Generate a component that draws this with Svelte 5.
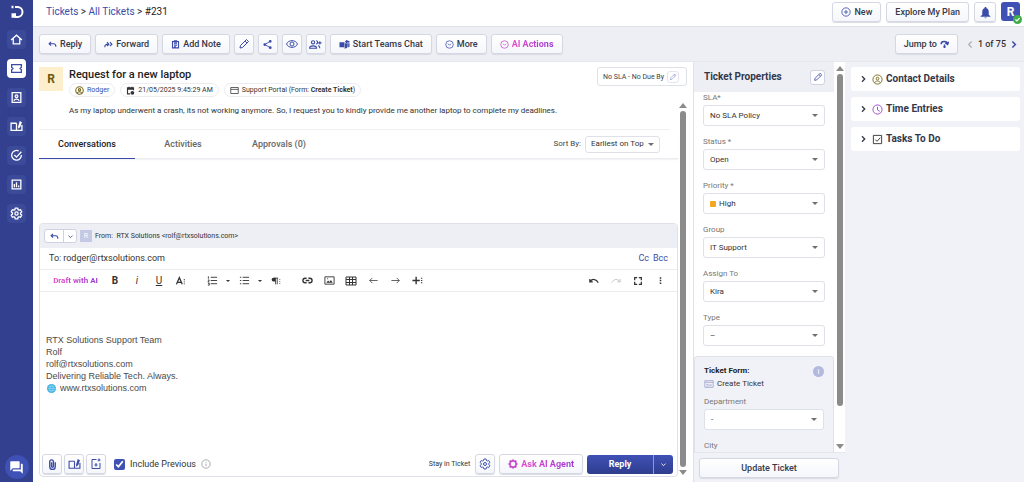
<script lang="ts">
  type Shape = { d: string; fill?: boolean };

  const GEAR =
    'M19.4 13c.1-.3.1-.6.1-1s0-.7-.1-1l2.1-1.6c.2-.2.2-.4.1-.7l-2-3.4c-.1-.3-.4-.3-.6-.3l-2.5 1c-.5-.4-1-.7-1.7-1l-.3-2.6c0-.2-.3-.4-.5-.4h-4c-.2 0-.5.2-.5.4L9.1 5c-.6.3-1.2.6-1.7 1l-2.4-1c-.3 0-.5 0-.7.3l-2 3.4c-.1.3 0 .5.2.7L4.6 11c-.1.3-.1.7-.1 1s0 .7.1 1l-2.1 1.6c-.2.2-.3.4-.2.7l2 3.4c.2.3.4.3.7.3l2.4-1c.5.4 1.1.7 1.7 1l.4 2.6c0 .2.3.4.5.4h4c.2 0 .5-.2.5-.4l.3-2.6c.7-.3 1.2-.6 1.7-1l2.5 1c.2 0 .5 0 .6-.3l2-3.4c.1-.3.1-.5-.1-.7z';

  const icons: Record<string, Shape[]> = {
    home: [{ d: 'M2 13L12 4l10 9M6 10v10h12V10' }],
    ticket: [{ d: 'M3 5h18v4.500l-2.500 2.500 2.500 2.500V19H3v-4.500L5.500 12 3 9.500z' }],
    contact: [{ d: 'M4 3h16v18H4zM7 18c2-4 8-4 10 0M12 7a2.500 2.500 0 1 1 0 5 2.500 2.500 0 0 1 0-5' }],
    book: [
      { d: 'M12 6H2v13h10V6M12 19h10V9' },
      { d: 'M15 12l3-10 4 2-3 9-4 3z', fill: true },
    ],
    done: [{ d: 'M21 11a9 9 0 1 1-5-7.500M8 11l4 4 9-10' }],
    chart: [{ d: 'M4 4h16v16H4zM8 17v-6M12 17V8M16 17v-3' }],
    gear: [{ d: GEAR }, { d: 'M12 9a3 3 0 1 1 0 6 3 3 0 0 1 0-6' }],
    agent: [{ d: 'M12 4l5 2 3 6-3 6-5 2-5-2-3-6 3-6z' }, { d: 'M12 1v3M12 20v3M1 12h3M20 12h3M4 4l3 3M17 17l3 3M20 4l-3 3M7 17l-3 3' }],
    chat: [{ d: 'M21 6h-2v9H6v2c0 .6.400 1 1 1h11l4 4V7c0-.6-.400-1-1-1zm-4 6V3c0-.6-.400-1-1-1H3c-.6 0-1 .400-1 1v14l4-4h10c.6 0 1-.400 1-1z', fill: true }],
    reply: [{ d: 'M8 5L3 10l5 5M3 10h12c4 0 6 2 6 8' }],
    forward: [{ d: 'M2 19c0-6 3-8 10-8M8 6l5 5-5 5M16 6l5 5-5 5' }],
    note: [{ d: 'M4 4h16v17H4zM9 2h6v4H9zM8 10h8M8 14h8M8 18h5' }],
    pencil: [{ d: 'M4 20l1-5L17 3l4 4L9 19zM14 6l4 4' }],
    share: [
      { d: 'M18 5L6 12l12 7' },
      { d: 'M18 2a3 3 0 1 1 0 6 3 3 0 0 1 0-6M6 9a3 3 0 1 1 0 6 3 3 0 0 1 0-6M18 16a3 3 0 1 1 0 6 3 3 0 0 1 0-6', fill: true },
    ],
    eye: [{ d: 'M1 12c4-9 18-9 22 0-4 9-18 9-22 0zM12 8a4 4 0 1 1 0 8 4 4 0 0 1 0-8' }],
    people: [{ d: 'M1 19c0-6 13-6 13 0zM7.500 5a3 3 0 1 1 0 6 3 3 0 0 1 0-6M13 5c4 0 4 6 0 6M17 14c2 1 3 3 3 5M20 6v6M17 9h6' }],
    teams: [
      { d: 'M1 7h11v11H1zM13 9h6v7c0 5-7 6-9 3h3zM15 3a3 3 0 1 1 0 5 3 3 0 0 1 0-5M20 9h3v6c0 2-1 3-3 3zM21 4a2 2 0 1 1 0 4 2 2 0 0 1 0-4', fill: true },
    ],
    circleDown: [{ d: 'M12 2a10 10 0 1 1 0 20 10 10 0 0 1 0-20M8 10l4 4 4-4' }],
    circlePlus: [{ d: 'M12 2a10 10 0 1 1 0 20 10 10 0 0 1 0-20M12 7v10M7 12h10' }],
    bell: [{ d: 'M12 2c-1 0-2 1-2 2-3 1-4 4-4 7v5l-3 3v1h18v-1l-3-3v-5c0-3-1-6-4-7 0-1-1-2-2-2zM10 21h4c0 2-4 2-4 0z', fill: true }],
    check: [{ d: 'M5 12l5 5 9-10' }],
    jump: [{ d: 'M3 11c0-9 16-9 17 0M14 8l6 4 3-7M12 12v9M9 18h6' }],
    left: [{ d: 'M15 4l-8 8 8 8' }],
    right: [{ d: 'M9 4l8 8-8 8' }],
    down: [{ d: 'M5 9l7 7 7-7' }],
    user: [{ d: 'M12 2a10 10 0 1 1 0 20 10 10 0 0 1 0-20M6 19c2-5 10-5 12 0M12 7a3 3 0 1 1 0 6 3 3 0 0 1 0-6' }],
    calendar: [
      { d: 'M20 11V5H4v16h7M8 2v3M16 2v3' },
      { d: 'M4 5h16v5H4zM17 13a5 5 0 1 1 0 10 5 5 0 0 1 0-10', fill: true },
    ],
    portal: [{ d: 'M2 4h20v16H2zM2 9h20' }],
    form: [{ d: 'M2 4h20v16H2zM2 8h20M6 13h5M14 13v4M17 13v4M6 17h5' }],
    clock: [{ d: 'M12 2a10 10 0 1 1 0 20 10 10 0 0 1 0-20M12 6v7l5 3' }],
    tasks: [{ d: 'M3 3h18v18H3zM7 12l4 4 7-8' }],
    numbered: [{ d: 'M8 5h14M8 12h14M8 19h14M3 3v5M2 11h3l-3 4h3M2 18h3v4H2' }],
    bullets: [{ d: 'M8 5h14M8 12h14M8 19h14M2 5h3M2 12h3M2 19h3' }],
    paragraph: [
      { d: 'M11 5v15M15 5v15M8 5h9M21 7v2M21 12v2M21 17v2' },
      { d: 'M11 4H6a4 4 0 0 0 0 9h5z', fill: true },
    ],
    textMore: [{ d: 'M1 20L8 4l7 16M4 15h8M20 8v2M20 13v2M20 18v2' }],
    link: [{ d: 'M10 7H7a5 5 0 0 0 0 10h3M14 7h3a5 5 0 0 1 0 10h-3M8 12h8' }],
    image: [{ d: 'M2 4h20v16H2z' }, { d: 'M5 17l4-5 3 3 3-4 4 6zM7 7h2v2H7z', fill: true }],
    table: [{ d: 'M2 4h20v16H2zM2 9h20M2 15h20M9 4v16M15 4v16' }],
    arrowLeft: [{ d: 'M23 12H2M9 5l-7 7 7 7' }],
    arrowRight: [{ d: 'M1 12h21M15 5l7 7-7 7' }],
    plusMore: [{ d: 'M9 4v16M1 12h16M21 6v2M21 11v2M21 16v2' }],
    undo: [{ d: 'M2 7v7h7M3 13c5-7 15-6 19 3' }],
    redo: [{ d: 'M22 7v7h-7M21 13C16 6 6 7 2 16' }],
    fullscreen: [{ d: 'M4 10V4h6M14 4h6v6M20 14v6h-6M10 20H4v-6' }],
    dots: [{ d: 'M10 3h4v4h-4zM10 10h4v4h-4zM10 17h4v4h-4z', fill: true }],
    clip: [{ d: 'M18 7v10a6 6 0 0 1-12 0V6a4 4 0 0 1 8 0v10a2 2 0 0 1-4 0V7' }],
    template: [{ d: 'M13 3H4v18h16V10M18 1v6M15 4h6M12 10v7M9 14h6' }],
    info: [{ d: 'M12 2a10 10 0 1 1 0 20 10 10 0 0 1 0-20M12 11v6M12 7v2' }],
    globe: [{ d: 'M2 12h20M12 2c-6 6-6 14 0 20M12 2c6 6 6 14 0 20M4 7h16M4 17h16' }],
  };

  const nav = ['home', 'ticket', 'contact', 'book', 'done', 'chart', 'gear'];

  const fields = [
    { id: 'sla', label: 'SLA*', value: 'No SLA Policy' },
    { id: 'status', label: 'Status *', value: 'Open' },
    { id: 'priority', label: 'Priority *', value: 'High', swatch: '#f5a623' },
    { id: 'group', label: 'Group', value: 'IT Support' },
    { id: 'assign', label: 'Assign To', value: 'Kira' },
    { id: 'type', label: 'Type', value: '–' },
  ];

  const panels = [
    { icon: 'user', color: '#7a6a1e', title: 'Contact Details' },
    { icon: 'clock', color: '#9a45cf', title: 'Time Entries' },
    { icon: 'tasks', color: '#333333', title: 'Tasks To Do' },
  ];

  const tabs = ['Conversations', 'Activities', 'Approvals (0)'];
  let activeTab = $state('Conversations');
  let recipient = $state('rodger@rtxsolutions.com');
  let includePrevious = $state(true);
</script>

{#snippet icon(name: string, size = 12, weight = 2)}
  <svg class="icon" width={size} height={size} viewBox="0 0 24 24" stroke-width={weight} aria-hidden="true">
    {#each icons[name] as shape}
      <path d={shape.d} class:solid={shape.fill} />
    {/each}
  </svg>
{/snippet}

{#snippet scrollbar()}
  <div class="scrollbar" aria-hidden="true">
    <span class="scrollbar__up"></span>
    <span class="scrollbar__thumb"></span>
    <span class="scrollbar__down"></span>
  </div>
{/snippet}

{#snippet tool(name: string, label: string, size = 12, weight = 3)}
  <button class="tool" aria-label={label}>{@render icon(name, size, weight)}</button>
{/snippet}

<div class="shell">
  <nav class="rail" aria-label="Main">
    <a class="rail__logo" href="/" aria-label="Desk home">
      <svg width="14" height="14" viewBox="0 0 28 28" fill="none" stroke="#ffffff" stroke-width="4">
        <path d="M10 4h5a10 10 0 0 1 0 20H9" />
        <path d="M3 4h4" stroke-width="5" />
        <path d="M3 21h9" stroke-width="9" />
      </svg>
    </a>
    {#each nav as item}
      <a class="rail__item" class:active={item === 'ticket'} href="/{item}" aria-label={item}>
        {@render icon(item, 13, 2.4)}
      </a>
    {/each}
    <button class="rail__chat" aria-label="Chat">{@render icon('chat', 15, 0)}</button>
  </nav>

  <div class="page">
    <header class="topbar">
      <div class="crumbs">
        <a href="/tickets">Tickets</a> &gt; <a href="/tickets/all">All Tickets</a> &gt; <span>#231</span>
      </div>
      <div class="topbar__actions">
        <button class="btn">{@render icon('circlePlus', 10)}New</button>
        <button class="btn">Explore My Plan</button>
        <button class="btn btn--square btn--bell" aria-label="Notifications">{@render icon('bell', 13, 0)}</button>
        <button class="me" aria-label="Profile">
          R<span class="me__status">{@render icon('check', 7, 4)}</span>
        </button>
      </div>
    </header>

    <div class="toolbar">
      <button class="btn">{@render icon('reply', 9, 3)}Reply</button>
      <button class="btn">{@render icon('forward', 9, 3)}Forward</button>
      <button class="btn">{@render icon('note', 9, 3)}Add Note</button>
      <button class="btn btn--square" aria-label="Edit">{@render icon('pencil', 12, 2)}</button>
      <button class="btn btn--square" aria-label="Share">{@render icon('share', 11, 2)}</button>
      <button class="btn btn--square" aria-label="Watch">{@render icon('eye', 12, 2)}</button>
      <button class="btn btn--square" aria-label="Add people">{@render icon('people', 13)}</button>
      <button class="btn">{@render icon('teams', 11, 0)}Start Teams Chat</button>
      <button class="btn">{@render icon('circleDown', 9)}More</button>
      <button class="btn btn--ai">{@render icon('circleDown', 9)}<span class="ai">AI Actions</span></button>
      <button class="btn btn--jump">Jump to {@render icon('jump', 9, 4)}</button>
      <div class="pager">
        <button class="muted" aria-label="Previous">{@render icon('left', 9, 3)}</button>
        <span>1 of 75</span>
        <button aria-label="Next">{@render icon('right', 9, 4)}</button>
      </div>
    </div>

    <div class="columns">
      <main class="ticket">
        <div class="ticket__head">
          <div class="avatar">R</div>
          <div class="ticket__title">
            <h1>Request for a new laptop</h1>
            <div class="chips">
              <a class="chip" href="/contacts/rodger"><span class="olive">{@render icon('user', 9, 3)}</span>Rodger</a>
              <span class="chip">{@render icon('calendar', 9, 3)}21/05/2025 9:45:29 AM</span>
              <span class="chip">{@render icon('portal', 9, 2)}<span>Support Portal (Form: <b>Create Ticket</b>)</span></span>
            </div>
          </div>
          <div class="sla">
            No SLA - No Due By
            <button aria-label="Edit SLA">{@render icon('pencil', 8)}</button>
          </div>
        </div>

        <div class="ticket__scroll">
          <div class="ticket__body">
            <p class="message">
              As my laptop underwent a crash, its not working anymore. So, I request you to kindly provide me another
              laptop to complete my deadlines.
            </p>

            <div class="tabs">
              {#each tabs as tab}
                <button class="tab" class:active={tab === activeTab} onclick={() => (activeTab = tab)}>{tab}</button>
              {/each}
              <label class="sort" for="sort">Sort By:</label>
              <div class="select select--sort">
                <select id="sort"><option>Earliest on Top</option></select>
              </div>
            </div>

            <section class="composer" aria-label="Reply">
              <div class="composer__from">
                <div class="split">
                  <button aria-label="Reply">{@render icon('reply', 9, 3)}</button>
                  <button aria-label="Reply options">{@render icon('down', 7, 3)}</button>
                </div>
                <span class="composer__initial">R</span>
                <span>From:&nbsp; RTX Solutions &lt;rolf@rtxsolutions.com&gt;</span>
              </div>
              <div class="composer__to">
                <label for="to">To:</label>
                <input id="to" type="text" bind:value={recipient} />
                <button>Cc</button>
                <button>Bcc</button>
              </div>
              <div class="format">
                <button class="draft"><span class="ai">Draft with AI</span></button>
                <button class="tool tool--bold" aria-label="Bold">B</button>
                <button class="tool tool--italic" aria-label="Italic">i</button>
                <button class="tool tool--underline" aria-label="Underline">U</button>
                {@render tool('textMore', 'More text', 10)}
                <div class="format__group">
                  {@render tool('numbered', 'Ordered list', 11, 2)}
                  <button class="tool tool--caret" aria-label="Ordered list style"></button>
                  {@render tool('bullets', 'Unordered list', 11, 2)}
                  <button class="tool tool--caret" aria-label="Unordered list style"></button>
                  {@render tool('paragraph', 'More paragraph', 10, 2)}
                </div>
                <div class="format__group">
                  {@render tool('link', 'Insert link', 11)}
                  {@render tool('image', 'Insert image', 11, 2)}
                  {@render tool('table', 'Insert table', 12, 2)}
                  {@render tool('arrowLeft', 'Left to right', 9, 2)}
                  {@render tool('arrowRight', 'Right to left', 9, 2)}
                  {@render tool('plusMore', 'More rich', 11)}
                </div>
                <div class="format__end">
                  {@render tool('undo', 'Undo', 10)}
                  <button class="tool faded" aria-label="Redo">{@render icon('redo', 10)}</button>
                  {@render tool('fullscreen', 'Fullscreen', 10)}
                  {@render tool('dots', 'More', 9)}
                </div>
              </div>
              <div class="editor" contenteditable="true" role="textbox" tabindex="0" aria-label="Message">
                <div>RTX Solutions Support Team</div>
                <div>Rolf</div>
                <div>rolf@rtxsolutions.com</div>
                <div>Delivering Reliable Tech. Always.</div>
                <div class="site"><span class="globe">{@render icon('globe', 9, 1)}</span>www.rtxsolutions.com</div>
              </div>
              <div class="composer__foot">
                <button class="btn btn--square" aria-label="Attach">{@render icon('clip', 11, 3)}</button>
                <button class="btn btn--square" aria-label="Insert article">{@render icon('book', 13)}</button>
                <button class="btn btn--square" aria-label="Insert template">{@render icon('template', 12)}</button>
                <label class="previous">
                  <input type="checkbox" bind:checked={includePrevious} />
                  Include Previous
                </label>
                <span class="hint">{@render icon('info', 10, 2)}</span>
                <span class="stay">Stay in Ticket</span>
                <button class="btn btn--square" aria-label="Reply settings">{@render icon('gear', 12, 2)}</button>
                <button class="btn btn--agent">{@render icon('agent', 10, 4)}<span class="ai">Ask AI Agent</span></button>
                <div class="send">
                  <button>Reply</button>
                  <button aria-label="Send options">{@render icon('down', 7, 3)}</button>
                </div>
              </div>
            </section>
          </div>
          {@render scrollbar()}
        </div>
      </main>

      <aside class="props">
        <div class="props__scroll">
          <div class="props__body">
            <div class="props__head">
              <h2>Ticket Properties</h2>
              <button class="edit" aria-label="Edit properties">{@render icon('pencil', 10, 2)}</button>
            </div>
            <div class="fields">
              {#each fields as field}
                <div class="field">
                  <label for={field.id}>{field.label}</label>
                  <div class="select">
                    {#if field.swatch}
                      <span class="swatch" style="background: {field.swatch}"></span>
                    {/if}
                    <select id={field.id}><option>{field.value}</option></select>
                  </div>
                </div>
              {/each}
            </div>
            <div class="form">
              <div class="form__title">
                <h3>Ticket Form:</h3>
                <span class="form__info">i</span>
              </div>
              <div class="form__name">{@render icon('form', 10)}Create Ticket</div>
              <div class="field">
                <label for="department">Department</label>
                <div class="select"><select id="department"><option>-</option></select></div>
              </div>
              <div class="field">
                <label for="city">City</label>
                <div class="select"><select id="city"><option>-</option></select></div>
              </div>
            </div>
          </div>
          {@render scrollbar()}
        </div>
        <div class="props__foot">
          <button class="btn">Update Ticket</button>
        </div>
      </aside>

      <aside class="panels">
        {#each panels as panel}
          <button class="panel">
            {@render icon('right', 8, 4)}
            <span class="panel__icon" style="color: {panel.color}">{@render icon(panel.icon, 11)}</span>
            {panel.title}
          </button>
        {/each}
      </aside>
    </div>
  </div>
</div>

<style>
  :global(body) {
    margin: 0;
  }

  .shell {
    --blue: #3b4ba8;
    --ink: #34384a;
    --line: #dfe1e8;
    --soft: #eeeff4;
    display: flex;
    height: 100vh;
    overflow: hidden;
    background: #ffffff;
    color: #333333;
    font-family: Roboto, 'Liberation Sans', sans-serif;
    font-size: 9px;
    line-height: 12px;
  }

  .shell * {
    box-sizing: border-box;
  }

  button,
  input,
  select {
    margin: 0;
    padding: 0;
    border: 0;
    background: none;
    color: inherit;
    font: inherit;
  }

  button {
    cursor: pointer;
  }

  a {
    color: var(--blue);
    text-decoration: none;
  }

  h1,
  h2,
  h3,
  p {
    margin: 0;
  }

  .icon {
    flex: none;
    display: block;
    fill: none;
    stroke: currentColor;
  }

  .icon .solid {
    fill: currentColor;
    stroke: none;
  }

  .ai {
    background: linear-gradient(90deg, #e44cc4, #9a35d6);
    background-clip: text;
    color: transparent;
    font-weight: 700;
  }

  /* left rail */
  .rail {
    flex: none;
    width: 33px;
    display: flex;
    flex-direction: column;
    align-items: center;
    gap: 10px;
    padding: 5px 0 3px;
    background: #333f8f;
    color: #ffffff;
  }

  .rail__logo {
    display: block;
    height: 15px;
  }

  .rail__logo svg {
    display: block;
  }

  .rail__item {
    width: 19px;
    height: 19px;
    display: grid;
    place-items: center;
    border-radius: 4px;
    background: #3c4a9a;
    color: #ffffff;
  }

  .rail__item.active {
    background: #ffffff;
    color: var(--blue);
  }

  .rail__chat {
    width: 24px;
    height: 24px;
    margin-top: auto;
    display: grid;
    place-items: center;
    border-radius: 50%;
    background: #3f51b5;
  }

  .page {
    flex: 1;
    min-width: 0;
    display: flex;
    flex-direction: column;
  }

  .topbar {
    flex: none;
    display: flex;
    align-items: center;
    justify-content: space-between;
    height: 27px;
    padding: 0 4px 2px 13px;
    border-bottom: 1px solid var(--line);
  }

  .crumbs {
    font-size: 10px;
    color: #222222;
  }

  .topbar__actions {
    display: flex;
    gap: 5px;
  }

  .btn {
    flex: none;
    display: flex;
    align-items: center;
    justify-content: center;
    gap: 3px;
    height: 20px;
    padding: 0 8px;
    border: 1px solid #d5d8e2;
    border-radius: 3px;
    background: linear-gradient(#ffffff, #f5f6fb);
    box-shadow: 0 1px 1px #d9dbe4;
    color: var(--ink);
    font-weight: 500;
    white-space: nowrap;
  }

  .btn :global(.icon) {
    color: var(--blue);
  }

  .btn--square {
    width: 20px;
    padding: 0;
  }

  .btn--bell {
    width: 22px;
  }

  .btn--ai :global(.icon),
  .btn--agent :global(.icon) {
    color: #c746cc;
  }

  .me {
    position: relative;
    width: 19px;
    height: 19px;
    border-radius: 3px;
    background: #3f51b5;
    color: #ffffff;
    font-size: 12px;
    font-weight: 700;
  }

  .me__status {
    position: absolute;
    right: -2px;
    bottom: -3px;
    width: 9px;
    height: 9px;
    display: grid;
    place-items: center;
    border-radius: 50%;
    background: #3fae49;
  }

  .toolbar {
    flex: none;
    display: flex;
    align-items: center;
    gap: 4px;
    height: 35px;
    padding: 0 6px;
    background: var(--soft);
    border-bottom: 1px solid #e6e7ee;
  }

  .btn--jump {
    margin-left: auto;
  }

  .pager {
    display: flex;
    align-items: center;
    gap: 3px;
    padding-left: 4px;
    font-weight: 500;
  }

  .pager button {
    color: var(--blue);
  }

  .pager .muted {
    color: #a9acb8;
  }

  .columns {
    flex: 1;
    min-height: 0;
    display: flex;
  }

  /* ticket */
  .ticket {
    flex: 1;
    min-width: 0;
    display: flex;
    flex-direction: column;
    padding: 5px 6px 0;
  }

  .ticket__head {
    flex: none;
    display: flex;
    align-items: flex-start;
    gap: 6px;
    height: 34px;
  }

  .avatar {
    width: 24px;
    height: 24px;
    display: grid;
    place-items: center;
    background: #fdefcb;
    color: #6b5a12;
    font-size: 12px;
    font-weight: 700;
  }

  .ticket__title {
    flex: 1;
    min-width: 0;
  }

  h1 {
    font-size: 11px;
    line-height: 16px;
    font-weight: 500;
    color: #1d1d1d;
  }

  .chips {
    display: flex;
    gap: 5px;
    font-size: 7px;
  }

  .chip {
    display: flex;
    align-items: center;
    gap: 3px;
    height: 14px;
    padding: 0 5px;
    border: 1px solid #ececf1;
    border-radius: 7px;
    white-space: nowrap;
  }

  .chip b {
    font-weight: 700;
  }

  .olive {
    color: #7a6a1e;
  }

  .sla {
    display: flex;
    align-items: center;
    gap: 3px;
    height: 19px;
    padding: 0 7px 0 5px;
    border: 1px solid var(--line);
    border-radius: 3px;
    color: #444444;
    font-size: 7px;
  }

  .sla button {
    width: 12px;
    height: 12px;
    display: grid;
    place-items: center;
    border: 1px solid #e4e5f0;
    border-radius: 3px;
    color: #8c94cc;
  }

  .ticket__scroll {
    flex: 1;
    min-height: 0;
    display: flex;
    gap: 1px;
  }

  .ticket__scroll > .scrollbar {
    width: 8px;
    padding: 2px 0 7px;
  }

  .ticket__body {
    flex: 1;
    min-width: 0;
    display: flex;
    flex-direction: column;
    padding-bottom: 5px;
  }

  .message {
    padding: 4px 0 12px 30px;
    margin-right: 8px;
    border-bottom: 1px solid #f0f0f3;
    font-size: 8px;
  }

  .tabs {
    flex: none;
    display: flex;
    align-items: center;
    height: 29px;
    padding-right: 18px;
    border-bottom: 1px solid #ececf0;
    box-shadow: 0 1px 1px #f4f4f6;
  }

  .tab {
    width: 96px;
    height: 29px;
    border-bottom: 1px solid transparent;
    color: #666666;
    font-weight: 500;
  }

  .tab.active {
    border-color: var(--blue);
    color: #222222;
  }

  .sort {
    margin-left: auto;
    padding-right: 4px;
    color: #444444;
    font-size: 8px;
  }

  .select {
    position: relative;
    display: flex;
    align-items: center;
    height: 21px;
    padding-left: 6px;
    border: 1px solid var(--line);
    border-radius: 3px;
    background: #ffffff;
    color: #333333;
    font-size: 8px;
  }

  .select select {
    flex: 1;
    min-width: 0;
    height: 100%;
    appearance: none;
    outline: 0;
  }

  .select::after {
    content: '';
    position: absolute;
    right: 6px;
    border: 3px solid transparent;
    border-top-color: #6f6f6f;
    border-bottom-width: 0;
    pointer-events: none;
  }

  .select--sort {
    width: 75px;
    height: 17px;
    padding-left: 5px;
  }

  .select--sort::after {
    right: 5px;
  }

  .swatch {
    width: 6px;
    height: 6px;
    margin-right: 3px;
    border-radius: 1px;
  }

  .composer {
    flex: 1;
    min-height: 0;
    margin-top: 64px;
    display: flex;
    flex-direction: column;
    border: 1px solid var(--line);
    border-radius: 4px;
    overflow: hidden;
  }

  .composer__from {
    flex: none;
    display: flex;
    align-items: center;
    gap: 3px;
    height: 24px;
    padding-left: 4px;
    background: var(--soft);
    font-size: 7px;
  }

  .split {
    display: flex;
    height: 14px;
    border: 1px solid #d0d3df;
    border-radius: 3px;
    background: #ffffff;
    color: var(--blue);
  }

  .split button {
    width: 18px;
    display: grid;
    place-items: center;
  }

  .split button + button {
    width: 13px;
    border-left: 1px solid #d0d3df;
  }

  .composer__initial {
    width: 12px;
    height: 12px;
    background: #c5c9e3;
    color: #ffffff;
    text-align: center;
  }

  .composer__to {
    flex: none;
    display: flex;
    align-items: center;
    gap: 4px;
    height: 22px;
    padding: 0 9px 2px;
    border-bottom: 1px solid #ececf0;
  }

  .composer__to label {
    margin-right: -2px;
  }

  .composer__to input {
    flex: 1;
    min-width: 0;
    outline: 0;
  }

  .composer__to button {
    color: var(--blue);
  }

  .format {
    flex: none;
    display: flex;
    align-items: center;
    height: 22px;
    padding-right: 6px;
    border-bottom: 1px solid #ececf0;
    color: #333333;
  }

  .draft {
    width: 64px;
    padding-left: 7px;
    font-size: 8px;
  }

  .tool {
    width: 22px;
    height: 20px;
    display: grid;
    place-items: center;
    font-size: 10px;
  }

  .tool--bold {
    font-weight: 700;
  }

  .tool--italic {
    font-style: italic;
  }

  .tool--underline {
    text-decoration: underline;
  }

  .tool--caret {
    width: 10px;
  }

  .tool--caret::after {
    content: '';
    border: 2px solid transparent;
    border-top-color: #333333;
    border-bottom-width: 0;
  }

  .faded {
    color: #b9b9bd;
  }

  .format__group {
    display: flex;
    margin-left: 9px;
  }

  .format__end {
    display: flex;
    margin-left: auto;
  }

  .editor {
    flex: 1;
    min-height: 0;
    padding: 42px 6px 0;
    outline: 0;
    color: #4a4a4a;
    font-family: 'Liberation Sans', Arial, sans-serif;
    font-size: 9px;
  }

  .site {
    display: flex;
    align-items: center;
    gap: 4px;
  }

  .globe {
    margin-left: 1px;
    border-radius: 50%;
    background: #3fb4e6;
    color: #d6f2fd;
  }

  .composer__foot {
    flex: none;
    display: flex;
    align-items: center;
    gap: 2px;
    padding: 0 4px 2px 2px;
  }

  .previous {
    display: flex;
    align-items: center;
    gap: 5px;
    margin-left: 6px;
  }

  .previous input {
    width: 11px;
    height: 11px;
    accent-color: #3f51b5;
  }

  .hint {
    margin-left: 3px;
    color: #9a9aa2;
  }

  .stay {
    margin-left: auto;
    padding-right: 3px;
    font-size: 7px;
  }

  .btn--agent {
    margin: 0 2px;
  }

  .send {
    display: flex;
    height: 19px;
    border-radius: 3px;
    background: linear-gradient(#3f51b5, #2f3d8e);
    color: #ffffff;
    overflow: hidden;
  }

  .send button {
    width: 66px;
    font-weight: 700;
  }

  .send button + button {
    width: 20px;
    display: grid;
    place-items: center;
    border-left: 1px solid #8f99d0;
  }

  .scrollbar {
    flex: none;
    display: flex;
    flex-direction: column;
    align-items: center;
    gap: 3px;
    padding: 4px 0;
  }

  .scrollbar__thumb {
    flex: 1;
    width: 6px;
    border-radius: 3px;
    background: #8b8b8b;
  }

  .scrollbar__up,
  .scrollbar__down {
    border: 4px solid transparent;
    border-top-width: 0;
    border-bottom: 5px solid #8b8b8b;
  }

  .scrollbar__down {
    border-top: 5px solid #8b8b8b;
    border-bottom-width: 0;
  }

  /* properties */
  .props {
    flex: none;
    width: 152px;
    display: flex;
    flex-direction: column;
    border-left: 1px solid var(--line);
  }

  .props__scroll {
    flex: 1;
    min-height: 0;
    display: flex;
    overflow: hidden;
  }

  .props__scroll > .scrollbar {
    width: 11px;
    padding-bottom: 3px;
  }

  .props__scroll .scrollbar__thumb {
    margin-bottom: 35px;
  }

  .props__body {
    flex: 1;
    min-width: 0;
    overflow: hidden;
  }

  .props__head {
    display: flex;
    align-items: center;
    justify-content: space-between;
    height: 30px;
    padding: 0 9px 0 10px;
    background: var(--soft);
  }

  h2 {
    font-size: 10px;
    font-weight: 700;
    color: var(--ink);
  }

  .edit {
    width: 15px;
    height: 15px;
    display: grid;
    place-items: center;
    border: 1px solid #cfd2e2;
    border-radius: 3px;
    background: #ffffff;
    color: var(--blue);
  }

  .fields {
    display: flex;
    flex-direction: column;
    gap: 10px;
    padding: 0 9px 10px;
  }

  .field {
    display: flex;
    flex-direction: column;
    gap: 1px;
  }

  .field label {
    font-size: 8px;
    color: #777777;
  }

  .form {
    display: flex;
    flex-direction: column;
    padding: 8px 9px;
    border: 1px solid var(--line);
    border-radius: 3px;
    background: #f1f2f8;
  }

  .form .field {
    margin-bottom: 10px;
  }

  .form__title {
    display: flex;
    justify-content: space-between;
    align-items: center;
  }

  h3 {
    font-size: 8px;
    font-weight: 700;
    color: #222222;
  }

  .form__info {
    width: 11px;
    height: 11px;
    border-radius: 50%;
    background: #b3b8de;
    color: #ffffff;
    font-size: 8px;
    line-height: 11px;
    text-align: center;
  }

  .form__name {
    display: flex;
    align-items: center;
    gap: 3px;
    margin: 1px 0 6px;
    font-size: 8px;
  }

  .form__name :global(.icon) {
    color: #9fa5d0;
  }

  .props__foot {
    flex: none;
    padding: 5px 6px 4px 5px;
    border-top: 1px solid #e4e6ee;
    background: #f1f2f8;
  }

  .props__foot .btn {
    width: 100%;
  }

  .panels {
    flex: none;
    width: 179px;
    display: flex;
    flex-direction: column;
    gap: 6px;
    padding: 5px 4px 0 6px;
    background: #f1f2f8;
  }

  .panel {
    display: flex;
    align-items: center;
    gap: 5px;
    height: 24px;
    padding-left: 8px;
    border-radius: 3px;
    background: #ffffff;
    color: var(--ink);
    font-size: 10px;
    font-weight: 700;
  }

  .panel__icon {
    margin-right: -2px;
  }
</style>
